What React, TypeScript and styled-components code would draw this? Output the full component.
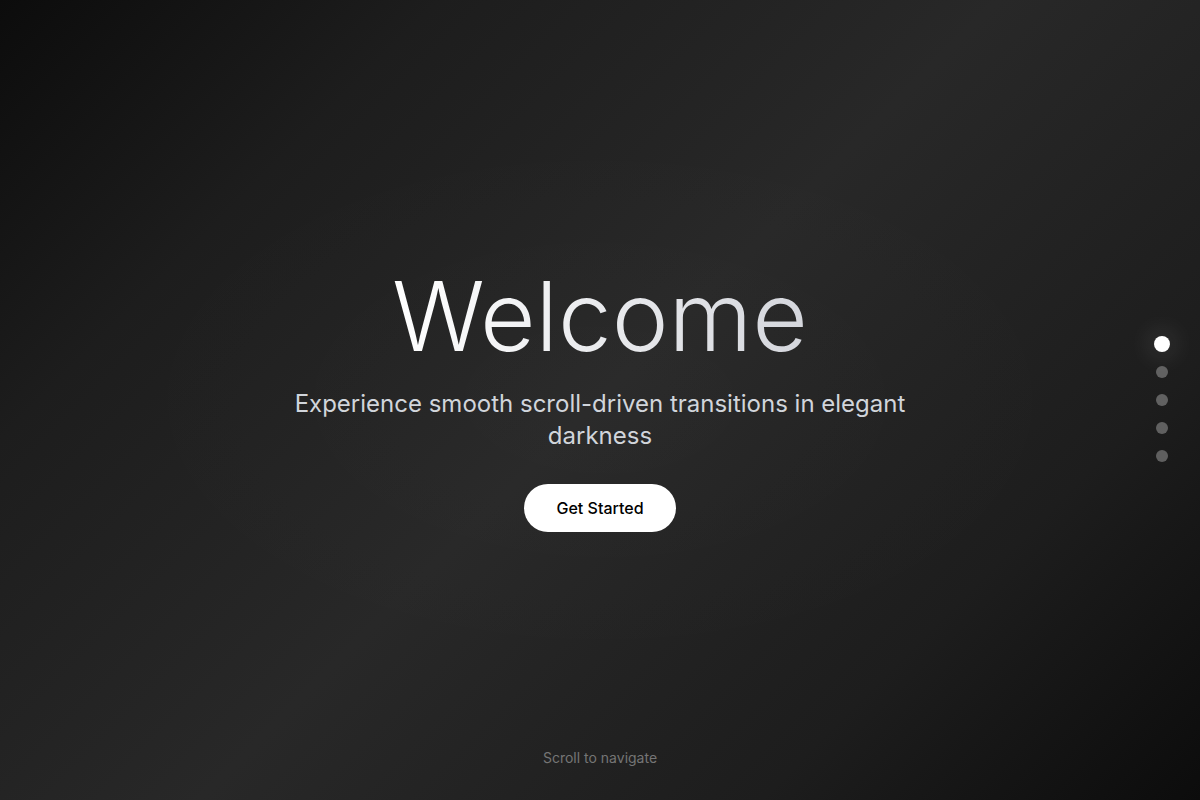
import React from "react";
import styled, { createGlobalStyle } from "styled-components";

const Global = createGlobalStyle`
  html, body { margin: 0; padding: 0; height: 100%; }
  body { font-family: Inter, "Noto Sans", sans-serif; background: #0a0a0a; }
  #root { height: 100%; }
`;

const Page = styled.main`
  position: relative;
  width: 100%;
  height: 100vh;
  overflow: hidden;
  background:
    radial-gradient(ellipse 60% 50% at 50% 50%, rgba(255,255,255,0.015), transparent 70%),
    linear-gradient(135deg, #0c0c0c 0%, #1d1d1d 22%, #282828 50%, #1d1d1d 78%, #0c0c0c 100%);
  display: flex;
  align-items: center;
  justify-content: center;
`;

const Hero = styled.section`
  display: flex;
  flex-direction: column;
  align-items: center;
  text-align: center;
  max-width: 672px;
  padding: 0 24px;
`;

const Title = styled.h1`
  margin: 0 0 24px;
  font-size: 96px;
  line-height: 1;
  font-weight: 300;
  letter-spacing: 0;
  background: linear-gradient(90deg, #ffffff 0%, #d4d6dc 100%);
  -webkit-background-clip: text;
  background-clip: text;
  color: transparent;
`;

const Subtitle = styled.p`
  margin: 0 0 32px;
  font-size: 24px;
  line-height: 32px;
  font-weight: 400;
  color: #d1d5db;
`;

const Button = styled.button`
  height: 48px;
  padding: 0 32px;
  border: none;
  border-radius: 9999px;
  background: #ffffff;
  color: #000;
  font-family: Inter, sans-serif;
  font-size: 16px;
  font-weight: 500;
  cursor: pointer;
`;

const Dots = styled.nav`
  position: absolute;
  right: 32px;
  top: 50%;
  transform: translateY(-50%);
  display: flex;
  flex-direction: column;
  gap: 16px;
`;

const Dot = styled.span<{ $active?: boolean }>`
  width: 12px;
  height: 12px;
  border-radius: 50%;
  background: ${(p) => (p.$active ? "#ffffff" : "rgba(255,255,255,0.3)")};
  transform: ${(p) => (p.$active ? "scale(1.33)" : "none")};
  box-shadow: ${(p) => (p.$active ? "0 0 20px rgba(255,255,255,0.3)" : "none")};
`;

const Hint = styled.div`
  position: absolute;
  bottom: 32px;
  left: 0;
  right: 0;
  text-align: center;
  font-size: 14px;
  line-height: 20px;
  color: #757575;
`;

export default function App() {
  return (
    <>
      <Global />
      <Page>
        <Hero>
          <Title>Welcome</Title>
          <Subtitle>Experience smooth scroll-driven transitions in elegant darkness</Subtitle>
          <Button>Get Started</Button>
        </Hero>
        <Dots>
          {[0, 1, 2, 3, 4].map((i) => (
            <Dot key={i} $active={i === 0} />
          ))}
        </Dots>
        <Hint>Scroll to navigate</Hint>
      </Page>
    </>
  );
}
